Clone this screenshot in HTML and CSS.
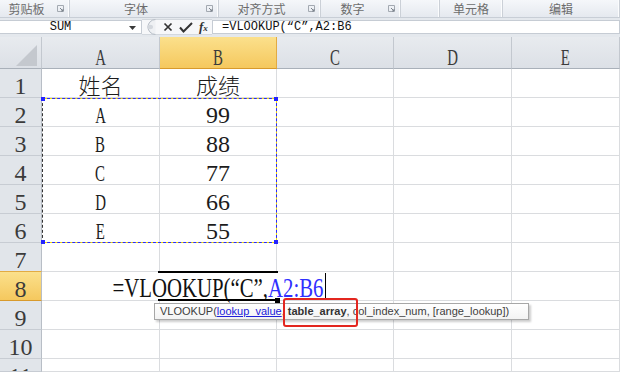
FILE: index.html
```html
<!DOCTYPE html>
<html lang="zh-CN">
<head>
    <meta charset="UTF-8">
    <title>VLOOKUP</title>
    <link rel="stylesheet" href="styles.css">
</head>
<body>

    <!-- 功能区分组标签 -->
    <div class="ribbon">
        <div class="grp g1"><span class="lbl">剪贴板</span><svg class="launch" width="7" height="7" viewBox="0 0 7 7"><path d="M0.5 6.5V0.5h6v6z" fill="none" stroke="#a3a9b1"/><path d="M3 3l3 3M6 4v2H4" fill="none" stroke="#7d848d"/></svg></div>
        <div class="grp g2"><span class="lbl">字体</span><svg class="launch" width="7" height="7" viewBox="0 0 7 7"><path d="M0.5 6.5V0.5h6v6z" fill="none" stroke="#a3a9b1"/><path d="M3 3l3 3M6 4v2H4" fill="none" stroke="#7d848d"/></svg></div>
        <div class="grp g3"><span class="lbl">对齐方式</span><svg class="launch" width="7" height="7" viewBox="0 0 7 7"><path d="M0.5 6.5V0.5h6v6z" fill="none" stroke="#a3a9b1"/><path d="M3 3l3 3M6 4v2H4" fill="none" stroke="#7d848d"/></svg></div>
        <div class="grp g4"><span class="lbl">数字</span><svg class="launch" width="7" height="7" viewBox="0 0 7 7"><path d="M0.5 6.5V0.5h6v6z" fill="none" stroke="#a3a9b1"/><path d="M3 3l3 3M6 4v2H4" fill="none" stroke="#7d848d"/></svg></div>
        <div class="grp g5"></div>
        <div class="grp g6"><span class="lbl">单元格</span></div>
        <div class="grp g7"><span class="lbl">编辑</span></div>
    </div>

    <!-- 编辑栏 -->
    <div class="fbar">
        <div class="namebox">
            <span>SUM</span>
            <svg class="drop" width="7" height="4" viewBox="0 0 7 4"><path d="M0 0h7L3.5 4z" fill="#3a3a3a"/></svg>
        </div>
        <div class="tools">
            <svg class="knob" width="14" height="16" viewBox="0 0 14 16"><path d="M13.5 0.5A7.5 7.5 0 0 0 13.5 15.5" fill="#eef0f3" stroke="#b4bbc4"/><ellipse cx="8" cy="8" rx="3" ry="2.2" fill="#d3d7dd"/></svg>
            <svg class="ico" width="10" height="10" viewBox="0 0 10 10"><path d="M1.5 1.5l7 7M8.5 1.5l-7 7" stroke="#333" stroke-width="1.7"/></svg>
            <svg class="ico" width="14" height="11" viewBox="0 0 14 11"><path d="M1 5.5l3.5 4L13 1" fill="none" stroke="#333" stroke-width="2"/></svg>
            <span class="fx">f<small>x</small></span>
        </div>
        <div class="input">=VLOOKUP(“C”,A2:B6</div>
    </div>

    <!-- 工作表 -->
    <div class="sheet">
        <div class="hd corner"><svg width="22" height="21" viewBox="0 0 22 21"><path d="M21 0V21H0z" fill="#c4c8ce"/></svg></div>
        <div class="hd"><span class="cn">A</span></div>
        <div class="hd sel"><span class="cn">B</span></div>
        <div class="hd"><span class="cn">C</span></div>
        <div class="hd"><span class="cn">D</span></div>
        <div class="hd"><span class="cn">E</span></div>

        <div class="rh">1</div>
        <div class="c zh">姓名</div>
        <div class="c zh">成绩</div>
        <div class="c"></div><div class="c"></div><div class="c"></div>

        <div class="rh">2</div>
        <div class="c"><span class="cn">A</span></div>
        <div class="c">99</div>
        <div class="c"></div><div class="c"></div><div class="c"></div>

        <div class="rh">3</div>
        <div class="c"><span class="cn">B</span></div>
        <div class="c">88</div>
        <div class="c"></div><div class="c"></div><div class="c"></div>

        <div class="rh">4</div>
        <div class="c"><span class="cn">C</span></div>
        <div class="c">77</div>
        <div class="c"></div><div class="c"></div><div class="c"></div>

        <div class="rh">5</div>
        <div class="c"><span class="cn">D</span></div>
        <div class="c">66</div>
        <div class="c"></div><div class="c"></div><div class="c"></div>

        <div class="rh">6</div>
        <div class="c"><span class="cn">E</span></div>
        <div class="c">55</div>
        <div class="c"></div><div class="c"></div><div class="c"></div>

        <div class="rh">7</div>
        <div class="c"></div><div class="c"></div><div class="c"></div><div class="c"></div><div class="c"></div>

        <div class="rh sel">8</div>
        <div class="c nor"></div>
        <div class="c nor ov"><span class="formula">=VLOOKUP(“C”,<span class="ref">A2:B6</span></span></div>
        <div class="c"></div><div class="c"></div><div class="c"></div>

        <div class="rh">9</div>
        <div class="c"></div><div class="c"></div><div class="c"></div><div class="c"></div><div class="c"></div>

        <div class="rh">10</div>
        <div class="c"></div><div class="c"></div><div class="c"></div><div class="c"></div><div class="c"></div>

        <div class="rh">11</div>
        <div class="c"></div><div class="c"></div><div class="c"></div><div class="c"></div><div class="c"></div>

        <!-- 复制区域的虚线框 A2:B6 -->
        <div class="ants">
            <i class="dot tl"></i><i class="dot tr"></i><i class="dot bl"></i><i class="dot br"></i>
        </div>

        <!-- 活动单元格 B8 -->
        <div class="active"></div>
        <div class="handle"></div>
        <div class="caret"></div>

        <!-- 函数参数提示 -->
        <div class="tip">VLOOKUP(<u>lookup_value</u>, <b>table_array</b>, col_index_num, [range_lookup])</div>
        <div class="mark"></div>
    </div>

</body>
</html>
```

FILE: styles.css
```css
body {
    margin: 0;
    width: 620px;
    height: 372px;
    overflow: hidden;
    background: #fff;
    font-family: "Liberation Serif", serif;
}

/* 功能区 */
.ribbon {
    display: flex;
    height: 17px;
    background: linear-gradient(#f5f7fa, #e5e9ef);
    border-bottom: 1px solid #c8ced6;
}
.grp {
    display: flex;
    align-items: center;
    flex: none;
    box-sizing: border-box;
    border-right: 1px solid #cbd0d7;
    box-shadow: inset -1px 0 #fbfcfd;
}
.lbl {
    flex: 1;
    text-align: center;
    font: 12px/17px "Noto Sans CJK SC", sans-serif;
    color: #6c6c6c;
    white-space: nowrap;
}
.launch {
    margin: 0 5px 0 4px;
}
.g1 { width: 70px; }
.g2 { width: 149px; }
.g3 { width: 102px; }
.g4 { width: 80px; }
.g5 { width: 39px; }
.g6 { width: 63px; }
.g7 { width: 117px; }

/* 编辑栏 */
.fbar {
    display: flex;
    height: 19px;
    box-sizing: border-box;
    padding: 2px 0 3px;
    background: #e4e8ed;
}
.namebox {
    width: 141px;
    display: flex;
    align-items: center;
    background: #fff;
    border: 1px solid #c6ccd4;
    border-left: 0;
    font: 12px "Liberation Mono", monospace;
    color: #111;
}
.namebox span {
    flex: 1;
    text-align: center;
    padding-right: 8px;
}
.drop {
    margin: 1px 5px 0 0;
}
.tools {
    width: 70px;
    display: flex;
    align-items: center;
    background: #f6f7f9;
    border-top: 1px solid #d3d8de;
    border-bottom: 1px solid #d3d8de;
    margin-top: -1px;
    margin-bottom: -1px;
}
.knob {
    margin-right: 7px;
}
.ico {
    margin-right: 6px;
}
.fx {
    font: italic 13px "Liberation Serif", serif;
    color: #333;
    font-weight: bold;
}
.fx small {
    font-size: 9px;
}
.input {
    flex: 1;
    background: #fff;
    border: 1px solid #c6ccd4;
    padding-left: 9px;
    font: 12px/12px "Liberation Mono", monospace;
    color: #111;
}

/* 工作表 */
.sheet {
    position: relative;
    display: grid;
    grid-template-columns: 42px 118px 117px 117px 118px 108px;
    grid-template-rows: 32px repeat(10, 29px) 13px;
    overflow: hidden;
}
.hd, .rh, .c {
    box-sizing: border-box;
    display: flex;
    justify-content: center;
    align-items: flex-start;
    line-height: 1;
    font-size: 24px;
}
.hd {
    padding-top: 8px;
    background: linear-gradient(#e8ebef, #dce0e6);
    border-right: 1px solid #c3c8cf;
    border-bottom: 1px solid #a9b0b9;
    color: #3b3b3b;
}
.hd:last-child {
    border-right: 0;
}
.hd.sel {
    background: linear-gradient(#fbe08c, #f5c85e);
    border-right-color: #e2ab43;
    border-bottom-color: #d89a2c;
}
.corner {
    padding: 8px 3px 0 0;
    justify-content: flex-end;
}
.rh {
    padding-top: 5px;
    background: #e1e5ea;
    border-right: 1px solid #b8bec6;
    border-bottom: 1px solid #c7ccd3;
    color: #3b3b3b;
    overflow: hidden;
}
.rh.sel {
    background: linear-gradient(#fbe08c, #f5c85e);
    border-top: 1px solid #e2ab43;
    border-bottom-color: #d89a2c;
    margin-top: -1px;
}
.c {
    padding-top: 5px;
    border-right: 1px solid #dadcdf;
    border-bottom: 1px solid #dadcdf;
    color: #1c1c1c;
}
.c.nor {
    border-right-color: transparent;
}
.zh {
    padding-top: 4px;
    font: 22px/1 "Noto Sans CJK SC", sans-serif;
    font-weight: 300;
}
.cn {
    display: inline-block;
    transform: scaleX(0.62);
}
.ov {
    padding-top: 3px;
    white-space: nowrap;
}
.formula {
    display: inline-block;
    font-size: 27px;
    color: #111;
    transform: scaleX(0.77);
}
.ref {
    color: #2f2fff;
}

/* 虚线框 */
.ants {
    position: absolute;
    left: 42px;
    top: 61px;
    width: 235px;
    height: 145px;
    box-sizing: border-box;
    border: 1px solid #f4e200;
    border-left-color: #fff;
}
.ants::after {
    content: "";
    position: absolute;
    inset: -1px;
    border: 1px dashed #2a2aff;
    border-left-color: #333;
}
.dot {
    position: absolute;
    width: 4px;
    height: 4px;
    background: #2424ff;
    z-index: 1;
}
.tl { left: -2px; top: -2px; }
.tr { right: -2px; top: -2px; }
.bl { left: -2px; bottom: -2px; }
.br { right: -2px; bottom: -2px; }

/* 活动单元格 */
.active {
    position: absolute;
    left: 158px;
    top: 234px;
    width: 120px;
    height: 30px;
    box-sizing: border-box;
    border-top: 2px solid #000;
    border-bottom: 2px solid #000;
}
.handle {
    position: absolute;
    left: 275px;
    top: 261px;
    width: 5px;
    height: 5px;
    background: #000;
}
.caret {
    position: absolute;
    left: 325px;
    top: 236px;
    width: 1px;
    height: 25px;
    background: #000;
}

/* 提示框 */
.tip {
    position: absolute;
    left: 154px;
    top: 266px;
    width: 375px;
    height: 17px;
    box-sizing: border-box;
    padding-left: 5px;
    border: 1px solid #a7a7a7;
    background: linear-gradient(#ffffff, #f3f3f3);
    box-shadow: 2px 2px 2px rgba(0, 0, 0, 0.2);
    font: 11px/15px "Liberation Sans", sans-serif;
    color: #3e3e3e;
    white-space: nowrap;
}
.tip u {
    color: #2020d8;
}
.tip b {
    color: #333;
}
.mark {
    position: absolute;
    left: 283px;
    top: 261px;
    width: 75px;
    height: 29px;
    box-sizing: border-box;
    border: 2px solid #e3261f;
    border-radius: 3px;
}
```
